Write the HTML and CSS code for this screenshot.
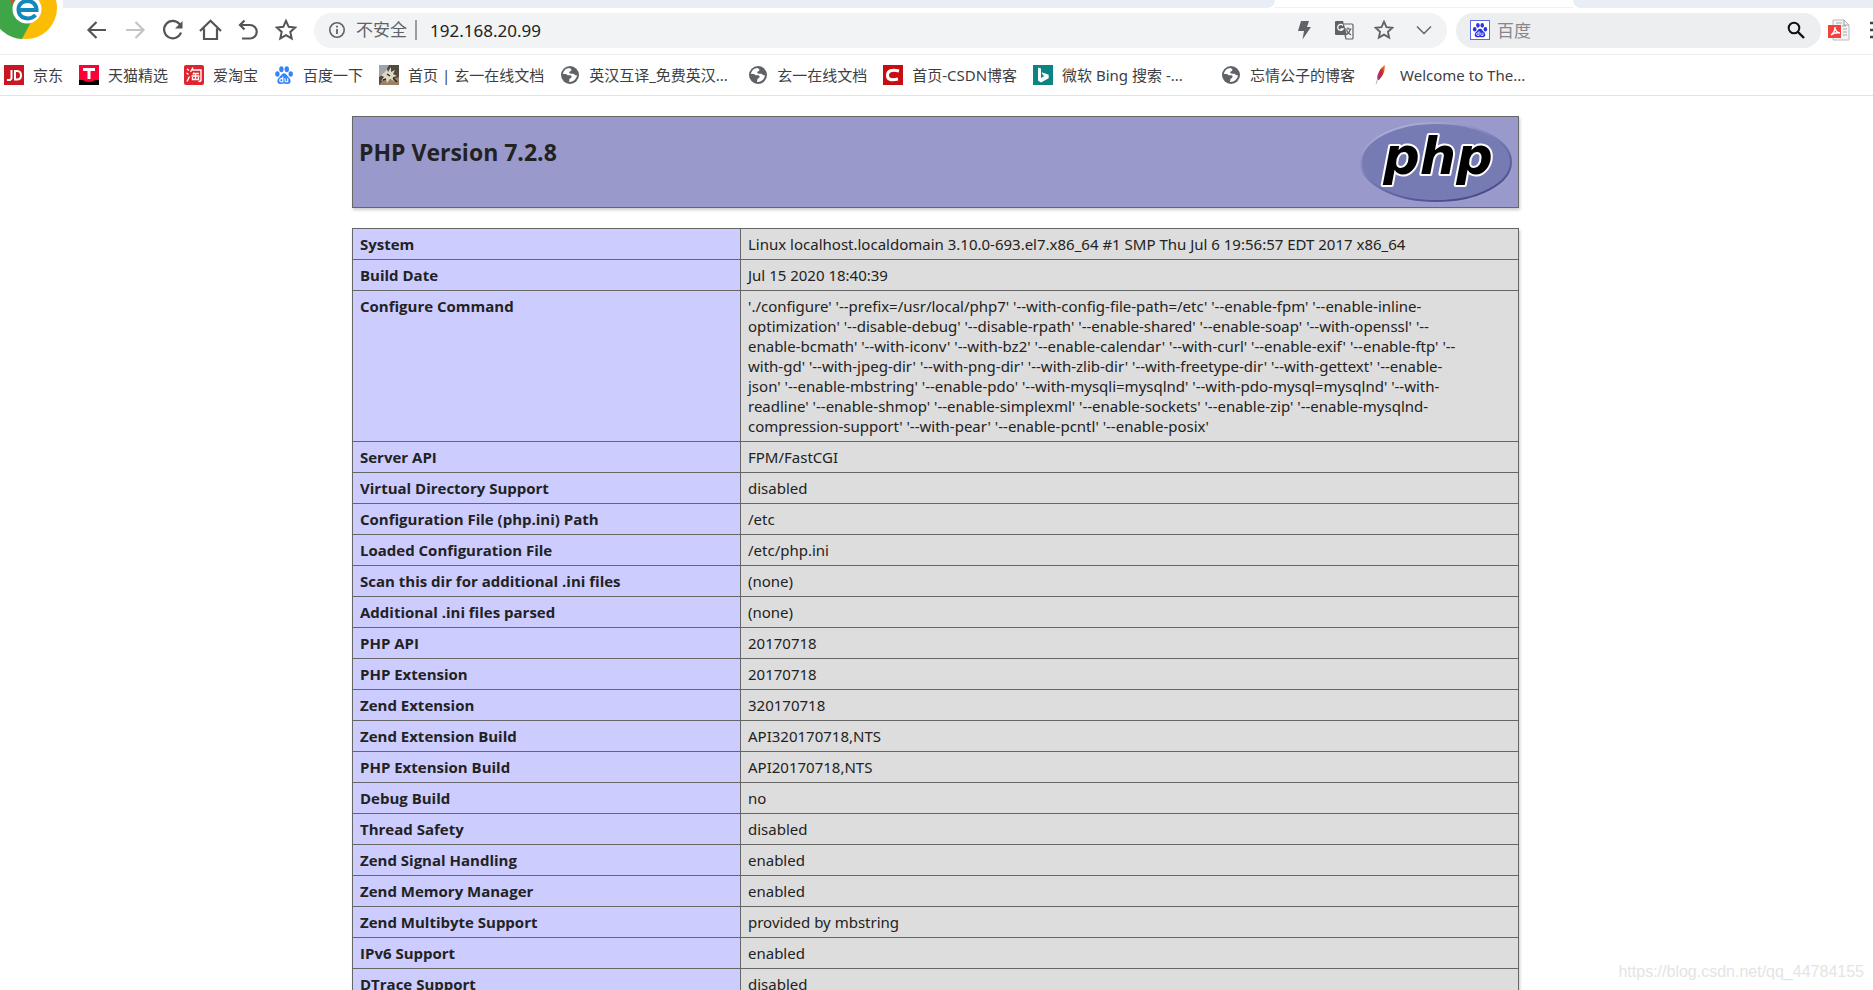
FILE: index.html
```html
<!DOCTYPE html>
<html lang="zh-CN">
<head>
<meta charset="utf-8">
<title>phpinfo()</title>
<link rel="stylesheet" href="styles.css">
</head>
<body>
<svg class="defs" aria-hidden="true">
  <defs>
    <symbol id="star" viewBox="0 0 22 22"><path d="M11 1.800l2.700 6 6.500.7-4.900 4.400 1.400 6.500L11 16.100l-5.700 3.300 1.400-6.500-4.900-4.400 6.500-.7z" fill="none" stroke="currentColor" stroke-width="2"/></symbol>
    <symbol id="globe" viewBox="0 0 20 20"><circle cx="10" cy="10" r="9" fill="#5f6368"/><path d="M9.500 2.900C6 3 3.400 5.500 3 9h3.200l1.300 1.200h2.700c1.500 0 1.800 2 .8 2.700l-1.500.8-.5 3.300c4.200.2 7.600-2.700 7.900-6.700-1.500.3-2.300-.7-3.100-1.300-1.500-.7-4.200.3-4.500-1.200-.2-1.100.7-1.600 1.800-1.700l.3-1.800z" fill="#fff"/></symbol>
    <symbol id="paw" viewBox="0 0 20 20"><ellipse cx="3.400" cy="9" rx="2.200" ry="2.800"/><ellipse cx="7.400" cy="4.200" rx="2.200" ry="3"/><ellipse cx="12.800" cy="4.200" rx="2.200" ry="3"/><ellipse cx="16.700" cy="9" rx="2.200" ry="2.800"/><path d="M10 8.300c2.300 0 3 2.400 4.700 3.900 2.200 1.700 3.200 6.600-1 6.800-1.500.1-2.400-.4-3.700-.4s-2.200.5-3.700.4c-4.200-.2-3.200-5.100-1-6.800C7 10.700 7.700 8.300 10 8.300z"/><path d="M8.800 11.500v5.300H7.300a1.400 1.400 0 010-3.200h1.500M11 13.300v2.300q0 1.200 1.200 1.200h1.500v-3.500" fill="none" stroke="#fff" stroke-width="1.100"/></symbol>
  </defs>
</svg>

<div class="browser">
  <header class="chrome">
    <div class="tabs"><div class="tab-strip"></div><div class="active-tab"></div><div class="tab-strip tab-strip-end"></div></div>
    <svg class="brand" viewBox="0 0 58 40" aria-label="Browser">
      <circle cx="26" cy="8" r="31" fill="#fbbc05"/>
      <path d="M26 8L8 -19A31 31 0 0022 39L31 22z" fill="#3fa648"/>
      <path d="M8 -7H54V0H14L12 5z" fill="#ea4335"/>
      <circle cx="27" cy="9" r="14.500" fill="#fff"/>
      <path d="M18 10H36.500C36.500 -2 18.500 -2 18.500 9.500c0 10 12 11 17 5.500" fill="none" stroke="#1488bd" stroke-width="4"/>
    </svg>
    <div class="toolbar">
      <nav class="nav-buttons">
        <button type="button" aria-label="后退"><svg viewBox="0 0 22 22"><path d="M20 11H3M10.500 3L2.500 11l8 8" class="line"/></svg></button>
        <button type="button" aria-label="前进" disabled><svg viewBox="0 0 22 22"><path d="M2 11h17M11.500 3l8 8-8 8" class="line"/></svg></button>
        <button type="button" aria-label="刷新"><svg viewBox="0 0 22 22"><path d="M19 13.500A8.700 8.700 0 1117.500 5l1 1.500" class="line"/><path d="M20.500 2v7.500H13z" fill="currentColor"/></svg></button>
        <button type="button" aria-label="主页"><svg viewBox="0 0 22 22"><path d="M0 12L10.500 1.800 21 12M4 9.500v10.500h13V9.500" class="line"/></svg></button>
        <button type="button" aria-label="恢复"><svg viewBox="0 0 22 22"><path d="M6.500 1.500L2 6l4.500 4.500M2.500 6H12a6.700 6.700 0 010 13.500H4" class="line"/></svg></button>
        <button type="button" aria-label="收藏"><svg viewBox="1 0 22 22"><use href="#star" width="22" height="22"/></svg></button>
      </nav>
      <div class="omnibox">
        <svg class="info" viewBox="0 0 18 18"><circle cx="9" cy="9" r="7.200" fill="none" stroke="currentColor" stroke-width="1.600"/><path d="M9 8v5M9 4.800v1.700" stroke="currentColor" stroke-width="1.800"/></svg>
        <label class="secure" for="url">不安全</label>
        <input id="url" class="url" type="text" value="192.168.20.99">
        <div class="page-actions">
          <button type="button" aria-label="极速模式"><svg viewBox="0 0 20 20"><path d="M7 1h8l-2 6h4L8.500 19.500 10 11H4z" fill="currentColor"/></svg></button>
          <button type="button" aria-label="翻译"><svg viewBox="0 0 20 20"><path d="M2 1h7l4 14H2q-1 0-1-1V2q0-1 1-1z" fill="currentColor"/><path d="M10 4h8q1 0 1 1v13q0 1-1 1h-6l-1-4M11 9h6.500M14 7.500V9M16.500 9q-1 4-4.500 6M12.500 10q1 3 4.500 5" fill="none" stroke="currentColor" stroke-width="1.200"/><path d="M9 5.500A3 3 0 109.300 9H6.500" fill="none" stroke="#fff" stroke-width="1.300"/></svg></button>
          <button type="button" aria-label="添加书签"><svg viewBox="0 0 22 22"><use href="#star"/></svg></button>
          <button type="button" aria-label="更多"><svg viewBox="0 0 20 20"><path d="M3 6.500l7 7 7-7" fill="none" stroke="currentColor" stroke-width="1.400"/></svg></button>
        </div>
      </div>
      <div class="search">
        <span class="engine"><svg viewBox="0 0 20 20"><use href="#paw"/></svg></span>
        <input type="text" placeholder="百度" aria-label="百度">
        <button type="button" aria-label="搜索"><svg viewBox="0 0 20 20"><circle cx="8" cy="8" r="5.300" fill="none" stroke="currentColor" stroke-width="2"/><path d="M12 12l6 6" stroke="currentColor" stroke-width="2.400"/></svg></button>
      </div>
      <button class="pdf" type="button" aria-label="PDF"><svg viewBox="0 0 22 22"><path d="M5 1h11l5 5v15H5z" fill="#f5f5f5" stroke="#bbb"/><path d="M16 1v5h5M14 7h4M15 10h4M15 13h4M15 16h4M8 4h6" fill="none" stroke="#aaa" stroke-width="1.200"/><rect x="0" y="6" width="13" height="13" fill="#f0423f"/><path d="M3 16q4-3 4-8 0 5 5 6-5-1-9 2z" fill="none" stroke="#fff" stroke-width="1.300"/></svg></button>
      <button class="menu" type="button" aria-label="菜单"><svg viewBox="0 0 20 20"><path d="M1 3h18M1 10h18M1 17h18" stroke="currentColor" stroke-width="2.500"/></svg></button>
    </div>
    <nav class="bookmarks">
      <a href="#"><svg viewBox="0 0 20 20"><rect width="20" height="20" fill="#c81623"/><path d="M7.500 5v8q0 2.500-4.500 2M11 6v8.500h2q4 0 4-4.200T13 6z" fill="none" stroke="#fff" stroke-width="2"/></svg>京东</a>
      <a href="#"><svg viewBox="0 0 20 20"><rect width="20" height="20" fill="#ff0036"/><path d="M0 15h4q2 2 6 2t6-2h4v5H0z" fill="#000"/><path d="M4 4.500h12M10 4v10" stroke="#fff" stroke-width="3"/></svg>天猫精选</a>
      <a href="#"><svg viewBox="0 0 20 20"><rect width="20" height="20" rx="2" fill="#e0232e"/><path d="M3 4l2 1.500M2.500 8l2 1.500M3 16.500l2.500-5M9 2.500L6.500 7M8 5h9v10q0 1.500-2.500 1.500M10 7.500l-1 2M9 8.500h6M7.500 11h8M11.500 8v6.500M8.500 12v2.500h6V12" fill="none" stroke="#fff" stroke-width="1.400"/></svg>爱淘宝</a>
      <a href="#"><svg viewBox="0 0 20 20" fill="#3385ff"><use href="#paw"/></svg>百度一下</a>
      <a href="#"><svg viewBox="0 0 20 20"><rect width="20" height="20" fill="#504a3f"/><path d="M0 0h10L5 9 0 12z" fill="#9ca6a9"/><path d="M0 20l6-7 5 2 9-3v8z" fill="#9b8065"/><path d="M5 8l3-4 1 3 3-5v5l4-2-2 4 4 2-4 1 1 4-4-2-3 4-1-4-5 2 3-4-3-2z" fill="#e1d8c4"/><path d="M8 9l3 2M14 13l4 4M4 15l3-1" stroke="#29251f" stroke-width="1.500"/></svg>首页 | 玄一在线文档</a>
      <a class="clipped" href="#"><svg viewBox="0 0 20 20"><use href="#globe"/></svg>英汉互译_免费英汉...</a>
      <a href="#"><svg viewBox="0 0 20 20"><use href="#globe"/></svg>玄一在线文档</a>
      <a href="#"><svg viewBox="0 0 20 20"><rect width="20" height="20" fill="#c80c14"/><path d="M16 6Q5 3.500 4.500 10T15 14" fill="none" stroke="#fff" stroke-width="3"/></svg>首页-CSDN博客</a>
      <a class="clipped" href="#"><svg viewBox="0 0 20 20"><rect width="20" height="20" fill="#0c8484"/><path d="M5 2.500l3 1v9.500l3.500-2-1.800-1-1-2.800 7 2.500v3.500L8 17.500l-3-2z" fill="#fff"/></svg>微软 Bing 搜索 -...</a>
      <a href="#"><svg viewBox="0 0 20 20"><use href="#globe"/></svg>忘情公子的博客</a>
      <a href="#"><svg viewBox="0 0 20 20"><defs><linearGradient id="feather" x1="1" y1="0" x2="0" y2="1"><stop offset="0" stop-color="#f69923"/><stop offset=".45" stop-color="#d22128"/><stop offset="1" stop-color="#8b3b96"/></linearGradient></defs><path d="M14 0c-5 3-8 9-8 15h2c4-4 6-9 6-15z" fill="url(#feather)"/><path d="M7 13l-2 6" stroke="#c6a5d0"/></svg>Welcome to The...</a>
    </nav>
  </header>

  <main class="viewport">
    <div class="phpinfo">
      <div class="banner">
        <h1>PHP Version 7.2.8</h1>
        <svg class="logo" viewBox="0 0 152 80" role="img" aria-label="PHP logo">
          <defs>
            <linearGradient id="rim" x1="0.200" y1="0" x2="0.800" y2="1"><stop offset="0" stop-color="#b4b5dc"/><stop offset=".5" stop-color="#7175ae"/><stop offset="1" stop-color="#434586"/></linearGradient>
          </defs>
          <ellipse cx="76" cy="40" rx="75" ry="39" fill="#777bb3" stroke="url(#rim)" stroke-width="2"/>
          <text x="78" y="52" class="logo-text">php</text>
        </svg>
      </div>
      <table>
        <tbody>
        <tr><th scope="row">System</th><td>Linux localhost.localdomain 3.10.0-693.el7.x86_64 #1 SMP Thu Jul 6 19:56:57 EDT 2017 x86_64</td></tr>
        <tr><th scope="row">Build Date</th><td>Jul 15 2020 18:40:39</td></tr>
        <tr><th scope="row">Configure Command</th><td>'./configure' '--prefix=/usr/local/php7' '--with-config-file-path=/etc' '--enable-fpm' '--enable-inline-<br>optimization' '--disable-debug' '--disable-rpath' '--enable-shared' '--enable-soap' '--with-openssl' '--<br>enable-bcmath' '--with-iconv' '--with-bz2' '--enable-calendar' '--with-curl' '--enable-exif' '--enable-ftp' '--<br>with-gd' '--with-jpeg-dir' '--with-png-dir' '--with-zlib-dir' '--with-freetype-dir' '--with-gettext' '--enable-<br>json' '--enable-mbstring' '--enable-pdo' '--with-mysqli=mysqlnd' '--with-pdo-mysql=mysqlnd' '--with-<br>readline' '--enable-shmop' '--enable-simplexml' '--enable-sockets' '--enable-zip' '--enable-mysqlnd-<br>compression-support' '--with-pear' '--enable-pcntl' '--enable-posix'</td></tr>
        <tr><th scope="row">Server API</th><td>FPM/FastCGI</td></tr>
        <tr><th scope="row">Virtual Directory Support</th><td>disabled</td></tr>
        <tr><th scope="row">Configuration File (php.ini) Path</th><td>/etc</td></tr>
        <tr><th scope="row">Loaded Configuration File</th><td>/etc/php.ini</td></tr>
        <tr><th scope="row">Scan this dir for additional .ini files</th><td>(none)</td></tr>
        <tr><th scope="row">Additional .ini files parsed</th><td>(none)</td></tr>
        <tr><th scope="row">PHP API</th><td>20170718</td></tr>
        <tr><th scope="row">PHP Extension</th><td>20170718</td></tr>
        <tr><th scope="row">Zend Extension</th><td>320170718</td></tr>
        <tr><th scope="row">Zend Extension Build</th><td>API320170718,NTS</td></tr>
        <tr><th scope="row">PHP Extension Build</th><td>API20170718,NTS</td></tr>
        <tr><th scope="row">Debug Build</th><td>no</td></tr>
        <tr><th scope="row">Thread Safety</th><td>disabled</td></tr>
        <tr><th scope="row">Zend Signal Handling</th><td>enabled</td></tr>
        <tr><th scope="row">Zend Memory Manager</th><td>enabled</td></tr>
        <tr><th scope="row">Zend Multibyte Support</th><td>provided by mbstring</td></tr>
        <tr><th scope="row">IPv6 Support</th><td>enabled</td></tr>
        <tr><th scope="row">DTrace Support</th><td>disabled</td></tr>
        </tbody>
      </table>
    </div>
  </main>
  <div class="watermark">https://blog.csdn.net/qq_44784155</div>
</div>
</body>
</html>
```
FILE: styles.css
```css
* { box-sizing: border-box; }
body {
  margin: 0;
  background: #fff;
  color: #222;
  font-family: "Noto Sans", "Noto Sans CJK SC", sans-serif;
}
button, input {
  margin: 0;
  padding: 0;
  border: 0;
  background: none;
  color: inherit;
  font: inherit;
}
button { display: flex; flex: none; }
.defs { position: absolute; width: 0; height: 0; }
.browser {
  position: relative;
  display: flex;
  flex-direction: column;
  height: 100vh;
  overflow: hidden;
}

/* Browser chrome */
.chrome { position: relative; flex: none; }
.tabs { display: flex; height: 8px; padding-left: 63px; }
.tab-strip { flex: 1; background: #e9edf6; border-bottom-right-radius: 8px; }
.active-tab { width: 298px; border-bottom: 1px solid #f0f1f4; }
.tab-strip-end { flex: none; width: 300px; border-radius: 0 0 0 8px; }
.brand { position: absolute; top: 0; left: 0; width: 58px; height: 40px; }
.toolbar {
  display: flex;
  align-items: center;
  height: 47px;
  padding: 0 0 2px 86px;
  border-bottom: 1px solid #ededf0;
  overflow: hidden;
}
.nav-buttons { display: flex; gap: 16px; width: 228px; color: #555; }
.nav-buttons svg { width: 22px; height: 22px; overflow: visible; }
.nav-buttons button:disabled { color: #c4c4c4; }
.line { fill: none; stroke: currentColor; stroke-width: 2.2; }
.omnibox {
  display: flex;
  flex: 1;
  align-items: center;
  height: 35px;
  padding: 0 13px 0 14px;
  border-radius: 18px;
  background: #f1f3f4;
  color: #5f6368;
}
.info { width: 18px; height: 18px; margin-right: 10px; }
.secure {
  padding-right: 8px;
  border-right: 2px solid #9a9da0;
  font-size: 17px;
  line-height: 20px;
}
.url { flex: 1; min-width: 0; padding-left: 13px; color: #222; font-size: 17px; }
.page-actions { display: flex; gap: 20px; }
.page-actions svg { width: 20px; height: 20px; }
.search {
  display: flex;
  align-items: center;
  width: 365px;
  height: 35px;
  margin-left: 9px;
  padding: 0 15px 0 14px;
  border-radius: 18px;
  background: #edeef0;
}
.engine { display: flex; width: 20px; height: 20px; padding: 1px; border: 1px solid #5b67ef; background: #fff; fill: #2932e1; }
.search input { flex: 1; min-width: 0; padding-left: 7px; font-size: 17px; }
.search input::placeholder { color: #85878a; opacity: 1; }
.search button { color: #111; }
.search button svg { width: 20px; height: 20px; }
.pdf { margin-left: 7px; }
.pdf svg { width: 22px; height: 22px; }
.menu { width: 4px; margin-left: 19px; color: #444; overflow: hidden; }
.menu svg { flex: none; width: 20px; height: 20px; }

.bookmarks {
  display: flex;
  align-items: center;
  gap: 16px;
  height: 41px;
  padding-left: 4px;
  border-bottom: 1px solid #e4e4e4;
}
.bookmarks a {
  display: flex;
  flex: none;
  align-items: center;
  gap: 9px;
  color: #3c4043;
  font-size: 15px;
  line-height: 20px;
  text-decoration: none;
}
.bookmarks .clipped { min-width: 172px; }
.bookmarks svg { width: 20px; height: 20px; }

/* PHP information page */
.viewport { flex: 1; min-height: 0; padding: 20px 2px 0 0; overflow: hidden; }
.phpinfo { width: 1167px; max-width: 100%; margin: 0 auto; }
.banner {
  display: flex;
  justify-content: space-between;
  height: 92px;
  margin-bottom: 20px;
  padding: 5px 6px;
  border: 1px solid #666;
  background: #99c;
  box-shadow: 1px 2px 3px #ccc;
}
.banner h1 { margin: 14px 0 0; font: 700 23px/32px "Open Sans", sans-serif; }
.logo { width: 152px; height: 80px; overflow: visible; }
.logo-text {
  fill: #000;
  stroke: #fff;
  stroke-width: 4px;
  stroke-linejoin: round;
  paint-order: stroke;
  font: italic 700 51px "DejaVu Sans", sans-serif;
  text-anchor: middle;
}
table {
  width: 100%;
  border-collapse: collapse;
  table-layout: fixed;
  box-shadow: 1px 2px 3px #ccc;
  font-size: 15px;
  line-height: 20px;
}
th, td { padding: 5px 7px; border: 1px solid #666; text-align: left; vertical-align: top; }
th { width: 388px; background: #ccf; font-family: "Open Sans", sans-serif; }
td { background: #ddd; }

.watermark {
  position: absolute;
  right: 9px;
  bottom: 8px;
  color: #e4e4e4;
  font: 16px/20px "Liberation Sans", sans-serif;
}
```
